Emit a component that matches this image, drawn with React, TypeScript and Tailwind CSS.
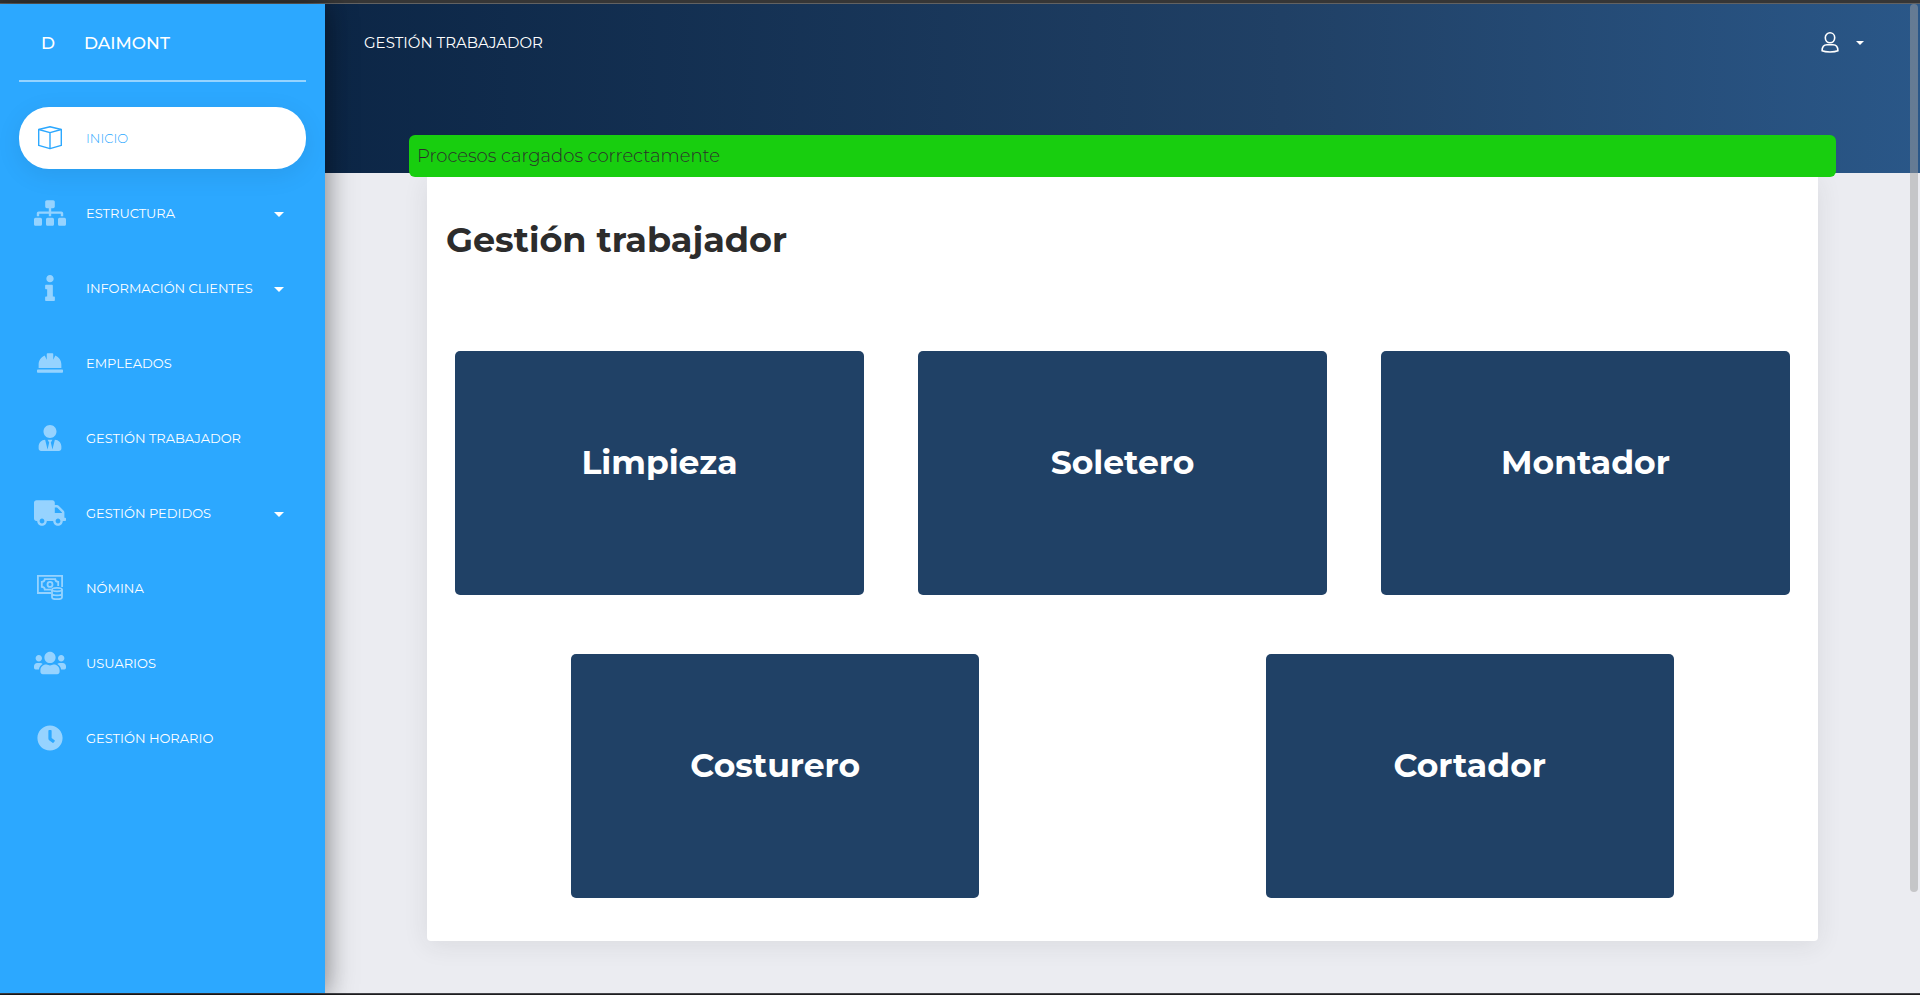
import type { ReactNode } from "react";
import {
  FaClock,
  FaHardHat,
  FaInfo,
  FaSitemap,
  FaTruck,
  FaUserTie,
  FaUsers,
} from "react-icons/fa";

type NavItem = {
  label: string;
  icon: ReactNode;
  active?: boolean;
  expandable?: boolean;
};

function BoxIcon() {
  return (
    <svg
      viewBox="0 0 26 26"
      className="size-[26px]"
      fill="none"
      stroke="currentColor"
      strokeWidth="1.4"
      strokeLinejoin="round"
      aria-hidden="true"
    >
      <path d="M1.7 4.5 13 1.7l11.3 2.8v15.9L13 23.7 1.7 20.4z" />
      <path d="M1.7 4.5 13 7.7l11.3-3.2M13 7.7v16" />
    </svg>
  );
}

function PayrollIcon() {
  return (
    <svg
      viewBox="0 0 26 26"
      className="size-[26px]"
      fill="none"
      stroke="currentColor"
      strokeWidth="1.8"
      aria-hidden="true"
    >
      <path d="M14 18H.9V.9h24.200v11" />
      <path d="M14 14.700H7.800c0-1.700-1.200-2.800-3-2.800V6.800c1.800 0 3-1.100 3-2.700h10.400c0 1.600 1.200 2.700 3 2.700v4.200" />
      <circle cx="13" cy="9.400" r="2.500" />
      <ellipse cx="20" cy="14.600" rx="5" ry="1.800" />
      <path d="M15 14.600v7.600c0 1.100 2.200 2 5 2s5-.9 5-2v-7.600M15 18.500c0 1 2.200 1.900 5 1.900s5-.9 5-1.900" />
    </svg>
  );
}

function PersonIcon() {
  return (
    <svg
      viewBox="0 0 20 22"
      className="h-[22px] w-5"
      fill="none"
      stroke="currentColor"
      strokeWidth="1.6"
      aria-hidden="true"
    >
      <ellipse cx="10" cy="5.800" rx="4.700" ry="5" />
      <path d="M7 12.800h6c3.200 0 4.900 2.400 4.900 6-2 .9-4.900 1.200-7.900 1.200s-5.900-.3-7.900-1.200c0-3.600 1.700-6 4.900-6z" />
    </svg>
  );
}

function Caret({ className }: { className: string }) {
  return (
    <svg viewBox="0 0 10 5" className={className} fill="currentColor" aria-hidden="true">
      <path d="M0 0h10L5 5z" />
    </svg>
  );
}

const navItems: NavItem[] = [
  { label: "INICIO", icon: <BoxIcon />, active: true },
  { label: "ESTRUCTURA", icon: <FaSitemap className="h-[26px] w-8" />, expandable: true },
  { label: "INFORMACIÓN CLIENTES", icon: <FaInfo className="size-[26px]" />, expandable: true },
  { label: "EMPLEADOS", icon: <FaHardHat className="size-[26px]" /> },
  { label: "GESTIÓN TRABAJADOR", icon: <FaUserTie className="size-[26px]" /> },
  { label: "GESTIÓN PEDIDOS", icon: <FaTruck className="h-[26px] w-8" />, expandable: true },
  { label: "NÓMINA", icon: <PayrollIcon /> },
  { label: "USUARIOS", icon: <FaUsers className="h-[26px] w-8" /> },
  { label: "GESTIÓN HORARIO", icon: <FaClock className="size-[26px]" /> },
];

function NavLink({ label, icon, active, expandable }: NavItem) {
  return (
    <a
      href="#"
      className={
        active
          ? "flex h-[62px] items-center rounded-[30px] bg-white pr-[22px] pl-[15px] font-light text-[#2ca8ff] shadow-[0_6px_26px_rgba(0,0,0,0.08)]"
          : "flex h-[62px] items-center rounded-[30px] pr-[22px] pl-[15px] text-white"
      }
    >
      <span
        className={
          active
            ? "flex w-8 shrink-0 justify-center"
            : "flex w-8 shrink-0 justify-center opacity-50"
        }
      >
        {icon}
      </span>
      <span className="ml-5 flex-1 text-[13px] leading-5 whitespace-nowrap">{label}</span>
      {expandable && <Caret className="mt-[3px] h-[5px] w-[10px]" />}
    </a>
  );
}

function ProcessTile({ name }: { name: string }) {
  return (
    <button
      type="button"
      className="h-[244px] w-[29.4%] rounded-[5px] bg-[#204166] pb-[22px] text-[33px] leading-10 font-bold text-white"
    >
      {name}
    </button>
  );
}

export default function App() {
  return (
    <div className="flex min-h-screen flex-col bg-[#ebecf1] font-['Montserrat','Inter',sans-serif] text-[#2c2c2c]">
      <div className="h-1 border-b border-[#626262] bg-[#363636]" />
      <div className="flex flex-1">
        <aside className="z-10 flex w-[325px] shrink-0 flex-col bg-[#2ca8ff] px-[19px] shadow-[0_2px_22px_rgba(0,0,0,0.2),0_2px_30px_rgba(0,0,0,0.35)]">
          <div className="flex h-[78px] items-center border-b-2 border-white/50 pt-0.5 pl-[22px] text-[17px] leading-6 font-medium text-white">
            <a href="#" className="w-[43px]">
              D
            </a>
            <a href="#">DAIMONT</a>
          </div>
          <nav className="mt-[25px] flex flex-col gap-[13px]">
            {navItems.map((item) => (
              <NavLink key={item.label} {...item} />
            ))}
          </nav>
        </aside>

        <main className="flex min-w-0 flex-1 flex-col">
          <header className="h-[169px] bg-[linear-gradient(to_right,#0c2646_0%,#204065_60%,#2a5788_100%)] pr-14 pl-[39px] text-white">
            <div className="flex h-[77px] items-center justify-between">
              <a href="#" className="text-[15px] leading-6">
                GESTIÓN TRABAJADOR
              </a>
              <button type="button" aria-label="Cuenta" className="flex items-center gap-4">
                <PersonIcon />
                <Caret className="h-1 w-2" />
              </button>
            </div>
          </header>

          <div className="px-[84px] pb-[51px]">
            <div
              role="status"
              className="relative -mt-[38px] rounded-md bg-[#18ce0f] px-2 py-[9px] text-[18px] leading-6 font-light"
            >
              Procesos cargados correctamente
            </div>
            <section className="mx-[18px] rounded-b bg-white px-px pt-[38px] pb-[43px] shadow-[0_4px_26px_rgba(39,39,39,0.09)]">
              <h1 className="px-[18px] text-[35px] leading-[50px] font-bold">
                Gestión trabajador
              </h1>
              <div className="mt-[86px] flex justify-around">
                <ProcessTile name="Limpieza" />
                <ProcessTile name="Soletero" />
                <ProcessTile name="Montador" />
              </div>
              <div className="mt-[59px] flex justify-around">
                <ProcessTile name="Costurero" />
                <ProcessTile name="Cortador" />
              </div>
            </section>
          </div>
        </main>
      </div>
      <div className="h-0.5 border-t border-[#45454a] bg-[#1e1e20]" />
      <div className="absolute top-1 right-0.5 z-20 h-[888px] w-2 rounded-full bg-[#a0a0a0]/50" />
    </div>
  );
}
